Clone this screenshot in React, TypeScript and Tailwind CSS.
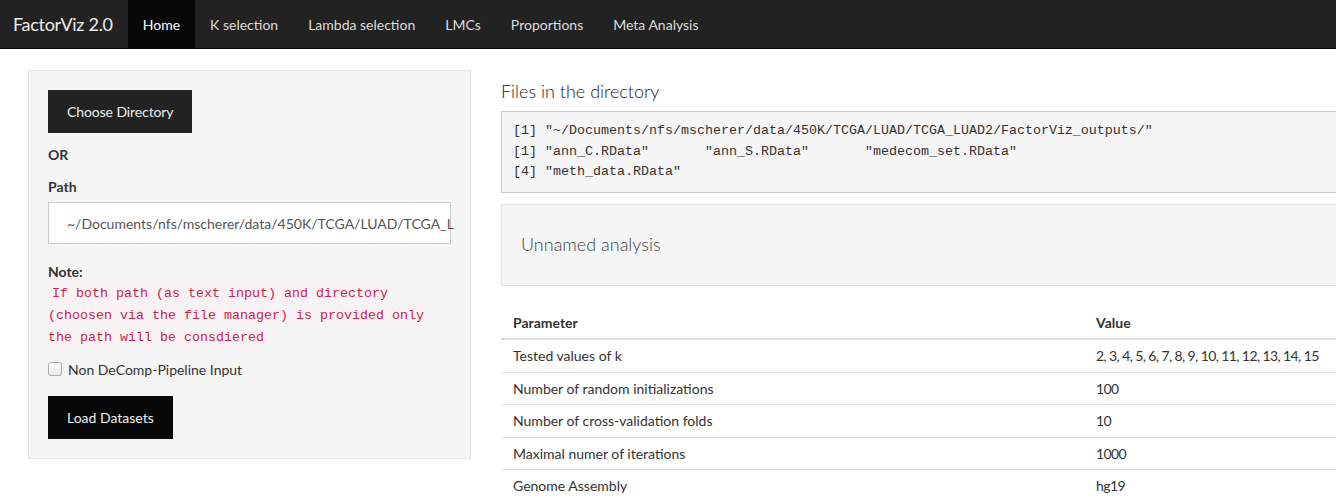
import React from "react";

const navItems = ["Home", "K selection", "Lambda selection", "LMCs", "Proportions", "Meta Analysis"];

const params: [string, string][] = [
  ["Tested values of k", "2, 3, 4, 5, 6, 7, 8, 9, 10, 11, 12, 13, 14, 15"],
  ["Number of random initializations", "100"],
  ["Number of cross-validation folds", "10"],
  ["Maximal numer of iterations", "1000"],
  ["Genome Assembly", "hg19"],
];

const sans = "font-['Lato',sans-serif]";
const mono = "font-['Liberation_Mono',monospace]";

export default function App() {
  return (
    <div className={`min-h-screen w-full overflow-hidden bg-white text-[14px] text-[#333] ${sans}`}>
      {/* Navbar */}
      <nav className="flex h-[49px] items-stretch border-b border-[#080808] bg-[#222]">
        <div className="flex items-center pl-[13px] pr-[15px] text-[18px] tracking-[-0.3px] text-[#eee]">FactorViz 2.0</div>
        {navItems.map((item, i) => (
          <div
            key={item}
            className={`flex items-center px-[15px] text-[14px] ${i === 0 ? "bg-[#080808] text-white" : "text-[#ddd]"}`}
          >
            {item}
          </div>
        ))}
      </nav>

      <div className="flex pt-[21px]">
        {/* Sidebar */}
        <div className="ml-[28px] w-[443px] shrink-0">
          <div className="border border-[#e3e3e3] bg-[#f5f5f5] p-[19px]">
            <button className="h-[43px] bg-[#222] px-[19px] text-[14px] tracking-[-0.1px] text-[#eee]">Choose Directory</button>
            <div className="mt-[12px] leading-5 font-bold">OR</div>
            <div className="mt-[12px] leading-5 font-bold">Path</div>
            <div className="mt-[5px] flex h-[42px] items-center border border-[#ccc] bg-white px-[18px] text-[#555]">
              ~/Documents/nfs/mscherer/data/450K/TCGA/LUAD/TCGA_L
            </div>
            <div className="mt-[18px] leading-5 font-bold">Note:</div>
            <div className={`mt-px text-[13.33px] leading-[22px] ${mono}`}>
              <code className="bg-[#f9f2f4] px-[4px] py-[2px] text-[#c7254e]">
                If both path (as text input) and directory
                <br />
                (choosen via the file manager) is provided only
                <br />
                the path will be consdiered
              </code>
            </div>
            <label className="mt-[10px] flex h-5 items-center gap-[6px]">
              <span className="h-[14px] w-[14px] rounded-[3px] border border-[#aaa] bg-gradient-to-b from-white to-[#e8e8e8]" />
              <span className="text-[#333]">Non DeComp-Pipeline Input</span>
            </label>
            <button className="mt-[17px] h-[43px] bg-[#080808] px-[19px] text-[14px] text-[#eee]">Load Datasets</button>
          </div>
        </div>

        {/* Main */}
        <div className="ml-[30px] w-[900px] shrink-0">
          <h4 className="mt-[10px] text-[18px] leading-[22px] font-light text-[#222]">Files in the directory</h4>
          <pre
            className={`mt-[9px] border border-[#ccc] bg-[#f5f5f5] px-[11px] py-[9px] text-[13.33px] leading-[20.5px] text-[#333] ${mono}`}
          >
            {`[1] "~/Documents/nfs/mscherer/data/450K/TCGA/LUAD/TCGA_LUAD2/FactorViz_outputs/"
[1] "ann_C.RData"       "ann_S.RData"       "medecom_set.RData"
[4] "meth_data.RData"`}
          </pre>

          <div className="mt-[11px] flex h-[82px] items-center border border-[#e3e3e3] bg-[#f5f5f5] px-[19px] text-[18px] font-light text-[#444]">
            Unnamed analysis
          </div>

          <table className="mt-[21px] w-full border-collapse text-left">
            <thead>
              <tr className="border-b-2 border-[#ddd]">
                <th className="w-[583px] px-[12px] py-[6px] leading-[19.5px] font-bold">Parameter</th>
                <th className="px-[12px] py-[6px] leading-[19.5px] font-bold">Value</th>
              </tr>
            </thead>
            <tbody>
              {params.map(([k, v], i) => (
                <tr key={k} className={i < params.length - 1 ? "border-b border-[#ddd]" : ""}>
                  <td className="px-[12px] py-[6px] leading-[19.5px]">{k}</td>
                  <td className="px-[12px] py-[6px] leading-[19.5px] tracking-[-0.6px]">{v}</td>
                </tr>
              ))}
            </tbody>
          </table>
        </div>
      </div>
    </div>
  );
}
